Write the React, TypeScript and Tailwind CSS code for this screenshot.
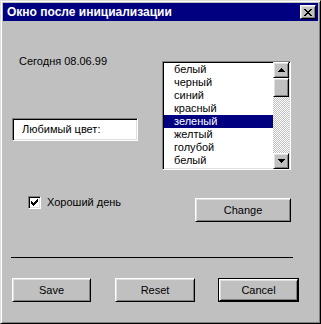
const colors = ["белый", "черный", "синий", "красный", "зеленый", "желтый", "голубой", "белый"]

const raised =
  "border border-t-white border-l-white border-r-black border-b-black shadow-[inset_1px_1px_0_#dfdfdf,inset_-1px_-1px_0_#808080]"
const sunken =
  "border border-t-[#808080] border-l-[#808080] border-r-white border-b-white shadow-[inset_1px_1px_0_#000,inset_-1px_-1px_0_#dfdfdf]"

function Button({ label, width, primary }: { label: string; width: string; primary?: boolean }) {
  if (primary) {
    return (
      <div className={`${width} h-[24px] border border-black`}>
        <button className={`w-full h-full ${raised} bg-[#c0c0c0] text-[11px] text-black`}>{label}</button>
      </div>
    )
  }
  return <button className={`${width} h-[24px] ${raised} bg-[#c0c0c0] text-[11px] text-black`}>{label}</button>
}

function Arrow({ up }: { up?: boolean }) {
  return (
    <svg width="7" height="4" viewBox="0 0 7 4" className="block">
      {up ? (
        <path d="M3 0h1v1h1v1h1v1h1v1H0V3h1V2h1V1h1z" fill="#000" />
      ) : (
        <path d="M0 0h7v1H6v1H5v1H4v1H3V3H2V2H1V1H0z" fill="#000" />
      )}
    </svg>
  )
}

function ListBox() {
  return (
    <div className={`w-[129px] h-[109px] ${sunken} bg-white flex p-px`}>
      <div className="flex-1 flex flex-col">
        {colors.map((c, i) => (
          <div
            key={i}
            className={`h-[13px] leading-[13px] pl-[10px] text-[11px] ${
              i === 4 ? "bg-[#000080] text-white" : "text-black"
            }`}
          >
            {c}
          </div>
        ))}
      </div>
      <div className="w-[16px] -my-px flex flex-col">
        <div className={`h-[16px] ${raised} bg-[#c0c0c0] flex items-center justify-center`}>
          <Arrow up />
        </div>
        <div className={`h-[19px] ${raised} bg-[#c0c0c0]`} />
        <div className="flex-1 bg-[repeating-conic-gradient(#c0c0c0_0_25%,#ffffff_0_50%)] bg-[length:2px_2px]" />
        <div className={`h-[16px] ${raised} bg-[#c0c0c0] flex items-center justify-center`}>
          <Arrow />
        </div>
      </div>
    </div>
  )
}

export default function App() {
  return (
    <div
      className="w-[321px] h-[324px] bg-[#c0c0c0] border border-t-[#dfdfdf] border-l-[#dfdfdf] border-r-black border-b-black shadow-[inset_1px_1px_0_#fff,inset_-1px_-1px_0_#808080] p-[2px] flex flex-col"
      style={{ fontFamily: '"Liberation Sans", Arial, sans-serif' }}
    >
      <div className="h-[18px] bg-[#000080] flex items-center justify-between pl-[4px] pr-[2px]">
        <span className="text-white font-bold text-[12px] leading-none">Окно после инициализации</span>
        <button className={`w-[16px] h-[14px] ${raised} bg-[#c0c0c0] flex items-center justify-center`}>
          <svg width="8" height="7" viewBox="0 0 8 7" className="block">
            <path
              d="M0 0h2v1h1v1h2V1h1V0h2v1H7v1H6v1H5v1h1v1h1v1h1v1H6V6H5V5H3v1H2v1H0V6h1V5h1V4h1V3H2V2H1V1H0z"
              fill="#000"
            />
          </svg>
        </button>
      </div>

      <div className="flex-1 flex flex-col pl-[9px] pt-[34px] text-[11px] text-black">
        <div className="flex items-start">
          <div className="w-[150px] flex flex-col">
            <div className="h-[13px] leading-[13px] pl-[7px]">Сегодня 08.06.99</div>
            <div className={`mt-[50px] w-[126px] h-[23px] ${sunken} bg-white flex items-center pl-[9px]`}>
              Любимый цвет:
            </div>
          </div>
          <div className="mt-[6px]">
            <ListBox />
          </div>
        </div>

        <div className="flex items-start mt-[26px]">
          <div className="w-[183px] pl-[16px] flex items-center gap-[6px]">
            <div className={`w-[13px] h-[13px] ${sunken} bg-white flex items-center justify-center`}>
              <svg width="7" height="7" viewBox="0 0 7 7" className="block">
                <path d="M6 0h1v3H6v1H5v1H4v1H3v1H2V6H1V5H0V2h1v1h1v1h1V3h1V2h1V1h1z" fill="#000" />
              </svg>
            </div>
            <span className="leading-[13px]">Хороший день</span>
          </div>
          <div className="mt-[2px]">
            <Button label="Change" width="w-[96px]" />
          </div>
        </div>

        <div className="mt-[35px] -ml-px w-[282px] h-px bg-black" />

        <div className="mt-[20px] flex">
          <Button label="Save" width="w-[79px]" />
          <div className="ml-[24px]">
            <Button label="Reset" width="w-[80px]" />
          </div>
          <div className="ml-[23px]">
            <Button label="Cancel" width="w-[81px]" primary />
          </div>
        </div>
      </div>
    </div>
  )
}
